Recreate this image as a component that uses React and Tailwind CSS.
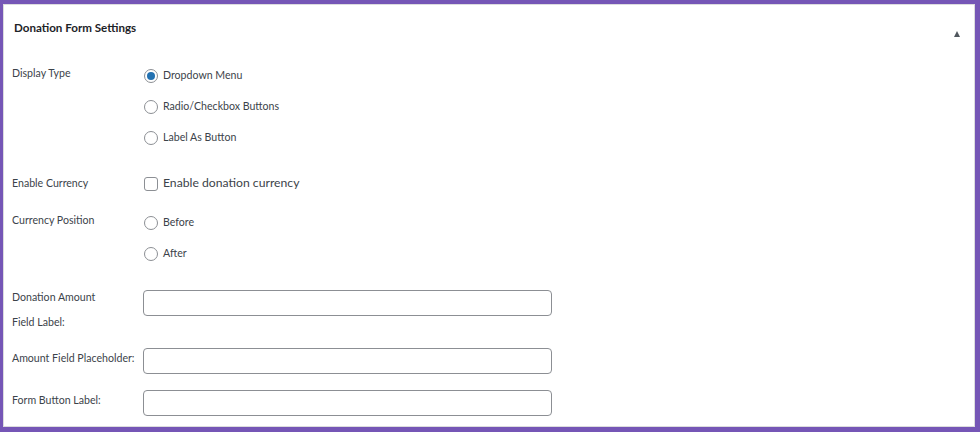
import React from 'react';

const Radio = ({ checked, label }) => (
  <label className="flex h-[31px] items-center gap-[5px]">
    <span className="flex h-[14px] w-[14px] items-center justify-center rounded-full border border-[#8c8f94] bg-white">
      {checked && <span className="h-[8px] w-[8px] rounded-full bg-[#2271b1]" />}
    </span>
    <span>{label}</span>
  </label>
);

const Field = ({ children, className = '' }) => (
  <div className={`flex ${className}`}>{children}</div>
);

export default function App() {
  return (
    <div className="h-[432px] w-[980px] bg-[#7556b6] pb-[5px] pl-[3px] pr-[5px] pt-[4px]">
      <div
        className="h-full w-full border border-[#dcdcde] bg-white text-[10.6px] text-[#3c434a]"
        style={{ fontFamily: 'Lato, "Open Sans", Arial, sans-serif' }}
      >
        {/* Header */}
        <div className="flex h-[45px] items-center justify-between pl-[10px] pr-[14px]">
          <h2 className="text-[11.6px] font-bold text-[#1d2327]">Donation Form Settings</h2>
          <span className="mt-[12px] h-0 w-0 border-x-[3.5px] border-b-[6px] border-x-transparent border-b-[#50575e]" />
        </div>

        <div className="pl-[8px] pt-[10px]">
          {/* Display Type */}
          <Field>
            <div className="w-[131px] pt-[6px]">Display Type</div>
            <div className="pl-[1px]">
              <Radio checked label="Dropdown Menu" />
              <Radio label="Radio/Checkbox Buttons" />
              <Radio label="Label As Button" />
            </div>
          </Field>

          {/* Enable Currency */}
          <Field className="mt-[15px] items-center">
            <div className="w-[131px]">Enable Currency</div>
            <label className="flex h-[31px] items-center gap-[5px] pl-[1px] text-[12.2px]">
              <span className="h-[14px] w-[14px] rounded-[3px] border border-[#8c8f94] bg-white" />
              <span>Enable donation currency</span>
            </label>
          </Field>

          {/* Currency Position */}
          <Field className="mt-[8px]">
            <div className="w-[131px] pt-[6px]">Currency Position</div>
            <div className="pl-[1px]">
              <Radio label="Before" />
              <Radio label="After" />
            </div>
          </Field>

          {/* Donation Amount Field Label */}
          <Field className="mt-[16px]">
            <div className="w-[131px] leading-[25px]">
              Donation Amount
              <br />
              Field Label:
            </div>
            <input className="mt-[5px] h-[26px] w-[409px] rounded-[4px] border border-[#8c8f94] bg-white" />
          </Field>

          {/* Amount Field Placeholder */}
          <Field className="mt-[13px] items-center">
            <div className="w-[131px] whitespace-nowrap pb-[4px]">Amount Field Placeholder:</div>
            <input className="h-[26px] w-[409px] rounded-[4px] border border-[#8c8f94] bg-white" />
          </Field>

          {/* Form Button Label */}
          <Field className="mt-[16px] items-center">
            <div className="w-[131px] whitespace-nowrap pb-[4px]">Form Button Label:</div>
            <input className="h-[26px] w-[409px] rounded-[4px] border border-[#8c8f94] bg-white" />
          </Field>
        </div>
      </div>
    </div>
  );
}
